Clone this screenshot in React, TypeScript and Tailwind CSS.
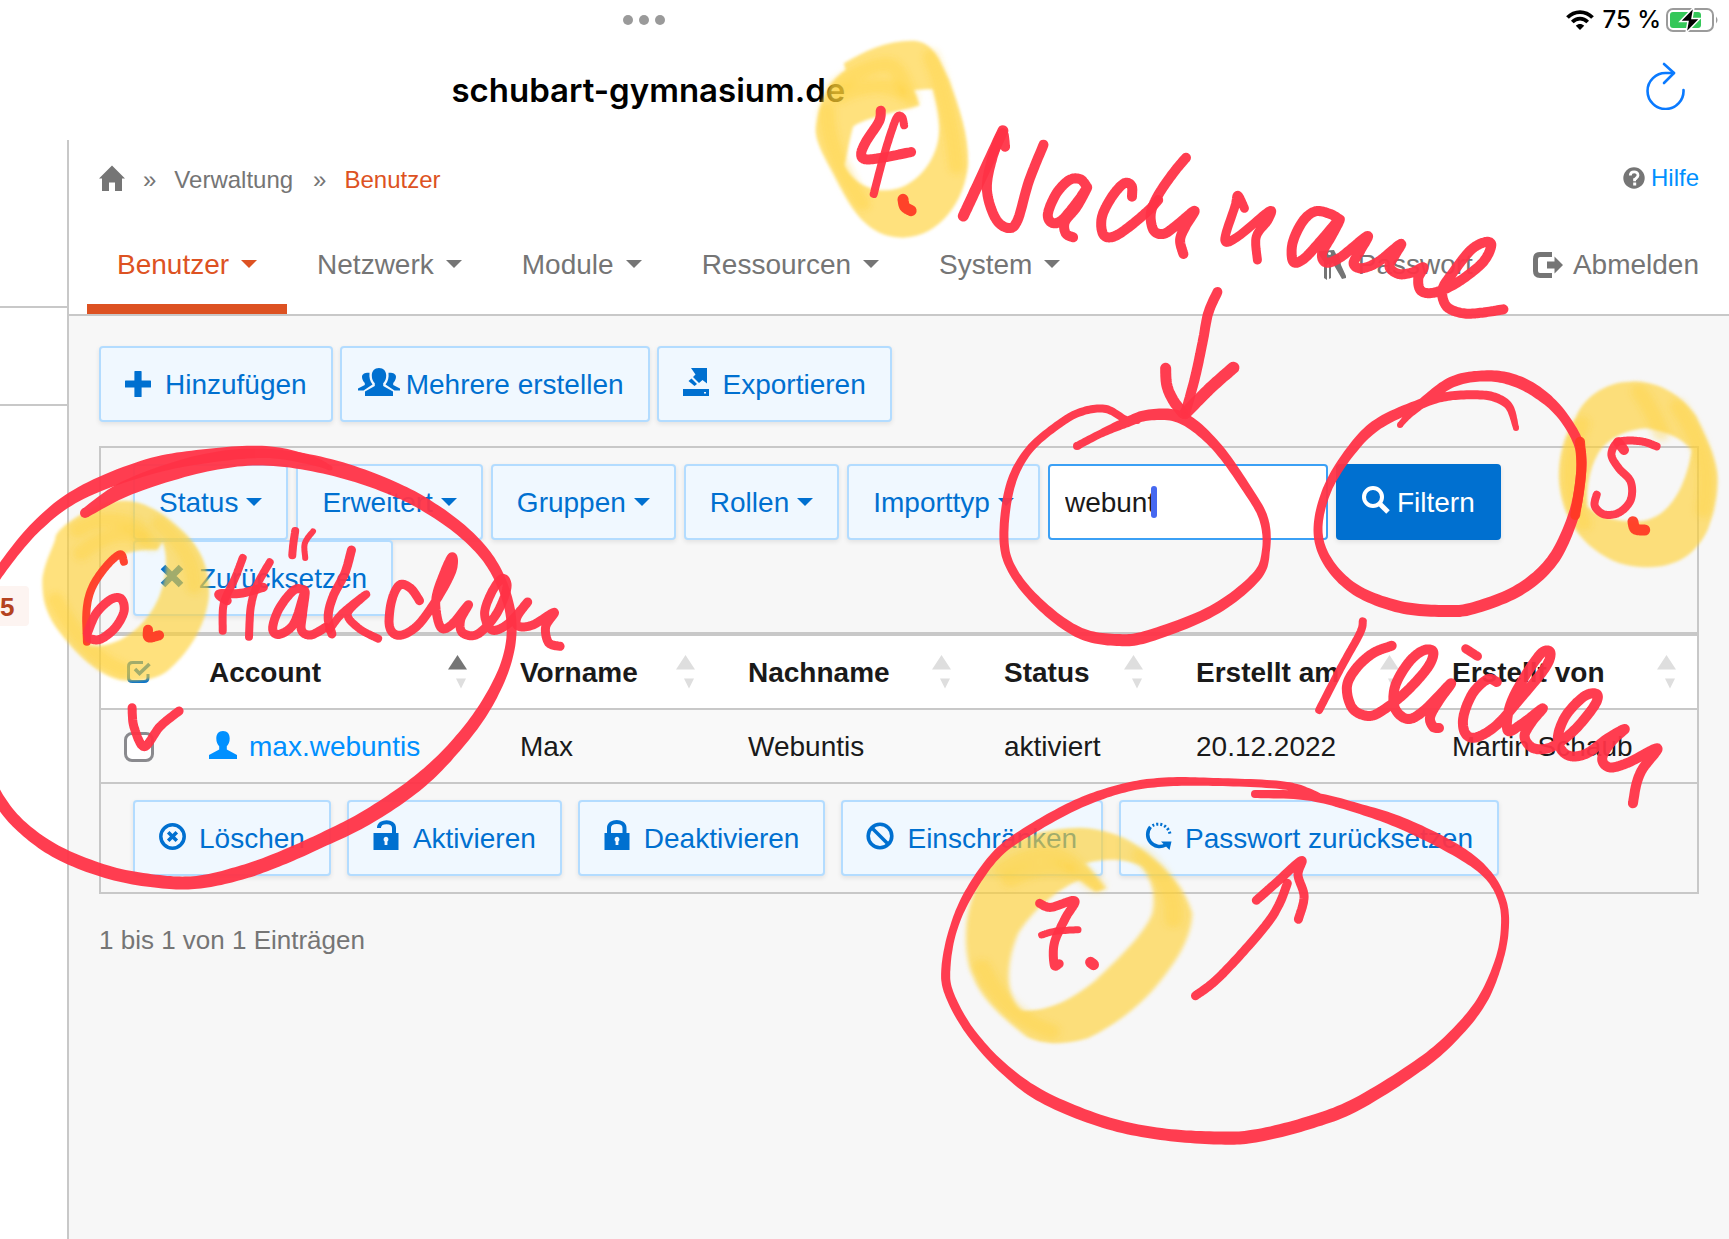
import React from "react";

type Pt = number[];

/* ---------- Icons ---------- */

function HomeIcon() {
  return (
    <svg viewBox="0 0 26 26" className="h-[26px] w-[26px]" fill="currentColor" aria-hidden="true">
      <path d="M13 0.500L26 13.500H23V26H16V17.500H10V26H3V13.500H0Z" />
    </svg>
  );
}

function HelpIcon() {
  return (
    <svg viewBox="0 0 22 22" className="h-[22px] w-[22px]" aria-hidden="true">
      <circle cx="11" cy="11" r="10.700" fill="#757575" />
      <path d="M7.300 8.600C7.300 3.600 15 3.800 15 8.200C15 10.800 12.100 10.800 12.100 13" fill="none" stroke="#fff" strokeWidth="2.800" />
      <path d="M10.200 11.200h2.800v3h-2.800zM10.200 15.400h3v3h-3z" fill="#fff" />
    </svg>
  );
}

function KeysIcon() {
  return (
    <svg viewBox="0 0 27 30" className="h-[30px] w-[27px]" fill="currentColor" aria-hidden="true">
      <path d="M0 1L15 0L17 4V11L12 14V28L10 29V14L8 15V30L5 28V12L0 5Z" />
      <path d="M17 5L20 4L22 15L27 26V28L23 29L16 17L14 13Z" />
      <circle cx="10.500" cy="3.500" r="1.500" fill="#fff" />
    </svg>
  );
}

function LogoutIcon() {
  return (
    <svg viewBox="0 0 30 26" className="h-[26px] w-[30px]" aria-hidden="true">
      <path d="M19 2.500H7Q2.500 2.500 2.500 7V19Q2.500 23.500 7 23.500H19" fill="none" stroke="currentColor" strokeWidth="5" />
      <path d="M14 9.500H21.500V4.500L30 13L21.500 21.500V16.500H14Z" fill="currentColor" />
    </svg>
  );
}

function PlusIcon() {
  return (
    <svg viewBox="0 0 26 26" className="-mt-[2px] h-[26px] w-[26px] shrink-0" fill="currentColor" aria-hidden="true">
      <path d="M10 0h6q.6 0 .6.600V9.500H25.400q.6 0 .6.600v5.800q0 .6-.6.600H16.600v8.900q0 .6-.6.600h-6q-.6 0-.6-.600V16.500H.600q-.6 0-.6-.600v-5.800q0-.6.600-.600H9.400V.600q0-.6.600-.600Z" />
    </svg>
  );
}

function UsersIcon() {
  return (
    <svg viewBox="0 0 42 28" className="-mt-[6px] h-[28px] w-[42px] shrink-0" fill="currentColor" aria-hidden="true">
      <path d="M21 0C25.500 0 28.200 3 28.200 7.500C28.200 11 27 13.500 25.200 15.200V18L35 23.500V28H7V23.500L16.800 18V15.200C15 13.500 13.800 11 13.800 7.500C13.800 3 16.500 0 21 0Z" />
      <path d="M11.500 4.800C11 9.500 12 13.500 14.500 16.500L5.500 22.500H0V20.500L6.800 17V15C4.800 13 4 10.500 4 8.800C4 6 7 4.500 11.500 4.800Z" />
      <path d="M30.500 4.800C31 9.500 30 13.500 27.500 16.500L36.500 22.500H42V20.500L35.200 17V15C37.200 13 38 10.500 38 8.800C38 6 35 4.500 30.500 4.800Z" />
    </svg>
  );
}

function ExportIcon() {
  return (
    <svg viewBox="0 0 26 28" className="-mt-[6px] h-[28px] w-[26px] shrink-0" fill="currentColor" aria-hidden="true">
      <path d="M8 0H24V15.500L19.500 12L16 15L10 9L12.500 6.500Z" />
      <path d="M8.500 10.500L14 16L11.500 18L5.500 13Z" />
      <path fillRule="evenodd" d="M0 21H26V28H0ZM21 24h2v1.500h-2z" />
    </svg>
  );
}

function CrossIcon() {
  return (
    <svg viewBox="0 0 24 24" className="-mt-[6px] h-6 w-6 shrink-0" aria-hidden="true">
      <path d="M3 3L21 21M21 3L3 21" stroke="currentColor" strokeWidth="6.500" />
    </svg>
  );
}

function SearchIcon() {
  return (
    <svg viewBox="0 0 28 28" className="-mt-[6px] h-7 w-7 shrink-0" fill="none" stroke="currentColor" aria-hidden="true">
      <circle cx="11" cy="11" r="9" strokeWidth="4" />
      <path d="M17.500 17.500L26 26" strokeWidth="5" />
    </svg>
  );
}

function DeleteIcon() {
  return (
    <svg viewBox="0 0 27 27" className="-mt-[6px] h-[27px] w-[27px] shrink-0" fill="none" stroke="currentColor" aria-hidden="true">
      <circle cx="13.500" cy="13.500" r="11.700" strokeWidth="3.500" />
      <path d="M9.200 9.200L17.800 17.800M17.800 9.200L9.200 17.800" strokeWidth="3.600" />
    </svg>
  );
}

function LockIcon({ open }: { open?: boolean }) {
  return (
    <svg viewBox="0 0 26 30" className="-mt-[8px] h-[30px] w-[26px] shrink-0" aria-hidden="true">
      <path
        d={open ? "M6 8V7.500C6.500 0.500 21 0.300 21 8V14" : "M5 14V8C5 0 20.500 0 20.500 8V14"}
        fill="none"
        stroke="currentColor"
        strokeWidth="4"
      />
      <path d="M.5 13H25.500V30H.500Z" fill="currentColor" />
      <path d="M13 16.800a2.600 2.600 0 0 1 1.400 4.700V25h-2.800V21.500A2.600 2.600 0 0 1 13 16.800Z" fill="#f0f8ff" />
    </svg>
  );
}

function BanIcon() {
  return (
    <svg viewBox="0 0 28 28" className="-mt-[6px] h-7 w-7 shrink-0" fill="none" stroke="currentColor" strokeWidth="3.600" aria-hidden="true">
      <circle cx="14" cy="14" r="11.800" />
      <path d="M6 6L22 22" />
    </svg>
  );
}

function RotateIcon() {
  return (
    <svg viewBox="0 0 28 28" className="-mt-[6px] h-7 w-7 shrink-0" fill="none" stroke="currentColor" aria-hidden="true">
      <path d="M6.500 4.800A12 12 0 0 0 21.500 23" strokeWidth="3.600" />
      <path d="M8.500 3.600A12 12 0 0 1 26 12" strokeWidth="3" strokeDasharray="2 2" />
      <path d="M17 19.500H27.500L25.500 28Z" fill="currentColor" stroke="none" />
    </svg>
  );
}

function PersonIcon() {
  return (
    <svg viewBox="0 0 28 28" className="-mt-1 h-7 w-7 shrink-0" fill="currentColor" aria-hidden="true">
      <path d="M14 0C18.500 0 20.700 3 20.700 7.500C20.700 11 19.500 13.500 17.800 15.200V18.500L28 24V28H0V24L10.200 18.500V15.200C8.500 13.500 7.300 11 7.300 7.500C7.300 3 9.500 0 14 0Z" />
    </svg>
  );
}

function CheckAllIcon() {
  return (
    <svg viewBox="0 0 24 22" className="h-[22px] w-6" fill="none" stroke="currentColor" strokeWidth="3" aria-hidden="true">
      <path d="M16 1.500H5.500Q1.500 1.500 1.500 5.500V16.500Q1.500 20.500 5.500 20.500H17Q21 20.500 21 16.500V13" />
      <path d="M8 8L12.500 12.500L22.500 3" strokeWidth="3.600" />
    </svg>
  );
}

function WifiIcon() {
  return (
    <svg viewBox="0 0 28 20" className="h-5 w-7" fill="none" stroke="#000" strokeWidth="3.800" aria-hidden="true">
      <path d="M1.500 7.500C8.500 0.200 19.500 0.200 26.500 7.500" />
      <path d="M6.300 12C10.700 7.600 17.300 7.600 21.700 12" />
      <path d="M14 20L9.800 15.800C12.200 13.400 15.800 13.400 18.200 15.800Z" fill="#000" stroke="none" />
    </svg>
  );
}

function BatteryIcon() {
  return (
    <svg viewBox="0 0 54 26" className="h-[26px] w-[54px]" aria-hidden="true">
      <rect x="1" y="2" width="46" height="22" rx="6" fill="#fff" stroke="#9b9b9b" strokeWidth="2" />
      <rect x="4" y="5" width="31" height="16" rx="3" fill="#34c759" />
      <path d="M50 9.500Q53 13 50 16.500Z" fill="#9b9b9b" />
      <path d="M28 0L14 14.500H22L20 26L34 11.500H26Z" fill="#000" stroke="#fff" strokeWidth="1.500" />
    </svg>
  );
}

function ReloadIcon() {
  return (
    <svg viewBox="0 0 40 48" className="h-12 w-10" fill="none" stroke="#0a7aff" strokeWidth="2.600" strokeLinecap="round" strokeLinejoin="round" aria-hidden="true">
      <path d="M28 11H20A18 18 0 1 0 37.500 28" />
      <path d="M18 2L28 11L18 21" />
    </svg>
  );
}

function Caret() {
  return (
    <svg viewBox="0 0 16 8" className="-mt-[2px] h-2 w-4 shrink-0" fill="currentColor" aria-hidden="true">
      <path d="M0 0H16L8 8Z" />
    </svg>
  );
}

/* ---------- Interface parts ---------- */

const buttonBase =
  "flex h-[76px] items-center rounded border-2 border-[#b3dcff] bg-[#f0f8ff] px-6 pt-[2px] text-[28px] leading-8 whitespace-nowrap text-[#0070d0] shadow-[0_2px_5px_rgba(0,0,0,0.09)]";

function IconButton({ icon, label }: { icon: React.ReactNode; label: string }) {
  return (
    <button type="button" className={buttonBase}>
      <span className="mr-[14px] flex w-[26px] justify-center">{icon}</span>
      {label}
    </button>
  );
}

function MenuButton({ label }: { label: string }) {
  return (
    <button type="button" className={buttonBase + " gap-2"}>
      {label}
      <Caret />
    </button>
  );
}

function NavItem({ label, active }: { label: string; active?: boolean }) {
  return (
    <button
      type="button"
      className={
        "flex h-[98px] items-center gap-3 border-b-10 pt-[10px] pr-[30px] pl-[30px] text-[28px] leading-8 " +
        (active ? "border-[#dd5222] text-[#dd5222]" : "border-transparent text-[#757575]")
      }
    >
      {label}
      <Caret />
    </button>
  );
}

function SortHeader({ label, sorted }: { label: string; sorted?: boolean }) {
  return (
    <th scope="col" className="h-[74px] border-b-2 border-[#c8c8c8] p-0 pr-5 pl-8 text-left font-bold">
      <div className="flex items-center justify-between whitespace-nowrap">
        <span className="pt-[2px]">{label}</span>
        <svg viewBox="0 0 20 34" className="h-[34px] w-5 shrink-0" aria-hidden="true">
          <path d="M0 14.500L9.500 0L19 14.500Z" fill={sorted ? "#757575" : "#dedede"} />
          <path d="M8 23.500H18L13 33.500Z" fill="#dedede" />
        </svg>
      </div>
    </th>
  );
}

/* ---------- Hand-drawn annotations ---------- */

const RED = "#ff3347";
const WARM = "#ff3a25";

function smooth(points: Pt[]): Pt[] {
  const out: Pt[] = [];
  for (let i = 0; i < points.length - 1; i++) {
    const a = points[Math.max(i - 1, 0)];
    const b = points[i];
    const c = points[i + 1];
    const d = points[Math.min(i + 2, points.length - 1)];
    for (let s = 0; s < 12; s++) {
      const t = s / 12;
      out.push(
        b.map(
          (_, k) =>
            0.5 *
            (2 * b[k] +
              (c[k] - a[k]) * t +
              (2 * a[k] - 5 * b[k] + 4 * c[k] - d[k]) * t * t +
              (3 * b[k] - a[k] - 3 * c[k] + d[k]) * t * t * t)
        )
      );
    }
  }
  out.push(points[points.length - 1]);
  return out;
}

const join = (points: Pt[]) => points.map((p) => p[0].toFixed(1) + " " + p[1].toFixed(1)).join("L");

/** A pen line of even width. Points are x, y pairs on a finely ruled tile at (ox, oy). */
function Pen({ at, pts, w = 9, color = RED }: { at: Pt; pts: string; w?: number; color?: string }) {
  const [ox, oy, sx] = at;
  const list = pts.split(" ").map((p) => {
    const [x, y] = p.split(",").map(Number);
    return [ox + x / sx, oy + y / 3];
  });
  return (
    <path d={"M" + join(smooth(list))} fill="none" stroke={color} strokeWidth={w} strokeLinecap="round" strokeLinejoin="round" opacity="0.95" />
  );
}

/** A pen line whose width changes along the way: x, y, width. */
function Ribbon({ pts }: { pts: string }) {
  const line = smooth(pts.split(" ").map((p) => p.split(",").map(Number)));
  const left: Pt[] = [];
  const right: Pt[] = [];
  line.forEach((p, i) => {
    const a = line[Math.max(i - 1, 0)];
    const b = line[Math.min(i + 1, line.length - 1)];
    const len = Math.hypot(b[0] - a[0], b[1] - a[1]) || 1;
    const nx = (-(b[1] - a[1]) / len) * (p[2] / 2);
    const ny = ((b[0] - a[0]) / len) * (p[2] / 2);
    left.push([p[0] + nx, p[1] + ny]);
    right.unshift([p[0] - nx, p[1] - ny]);
  });
  const ends = [line[0], line[line.length - 1]];
  return (
    <g fill={RED} opacity="0.95">
      <path d={"M" + join([...left, ...right]) + "Z"} />
      {ends.map((p, i) => (
        <circle key={i} cx={p[0]} cy={p[1]} r={p[2] / 2} />
      ))}
    </g>
  );
}

const T2: Pt = [570, 0, 2.703];
const T3: Pt = [1149, 0, 2.703];
const T4: Pt = [0, 400, 2.703];
const T6: Pt = [1149, 400, 2.703];
const T8: Pt = [900, 780, 2.45];

function Highlight({ at, ring, strokes }: { at: Pt; ring: string; strokes: string[] }) {
  return (
    <g transform={`translate(${at[0]} ${at[1]}) scale(${1 / at[2]} ${1 / 3})`}>
      <path d={ring} fillRule="evenodd" fill="#ffd033" opacity="0.63" filter="url(#soft)" />
      <g filter="url(#softer)">
        {strokes.map((d) => (
          <path key={d} d={d} fill="none" stroke="#ffd033" strokeWidth="44" strokeLinecap="round" opacity="0.34" />
        ))}
      </g>
    </g>
  );
}

function Annotations() {
  return (
    <svg viewBox="0 0 1729 1239" preserveAspectRatio="xMinYMin meet" className="pointer-events-none absolute top-0 left-0 w-full" aria-hidden="true">
      <defs>
        <filter id="soft" x="-10%" y="-10%" width="120%" height="120%">
          <feGaussianBlur stdDeviation="5" />
        </filter>
        <filter id="softer" x="-20%" y="-20%" width="140%" height="140%">
          <feGaussianBlur stdDeviation="9" />
        </filter>
      </defs>

      <Highlight
        at={T2}
        ring="M740 190C800 150 860 120 930 122C980 125 1000 180 1025 240C1050 320 1078 400 1076 490C1070 600 1000 712 900 713C800 712 760 620 730 560C700 490 665 440 664 390C670 320 690 250 745 210ZM980 267L930 270L945 315C930 325 800 350 765 380C755 420 750 460 742 495C760 540 800 570 850 571C930 572 1000 480 998 380C997 340 988 300 980 267Z"
        strokes={["M715 265C770 215 830 190 865 195C895 210 900 260 920 295", "M725 290C780 260 850 245 890 275", "M975 170C1010 260 1035 390 1045 500", "M695 330C690 410 735 520 790 610"]}
      />
      <Highlight
        at={T6}
        ring="M1300 -55C1230 -55 1170 0 1155 50C1120 110 1108 170 1108 230C1112 330 1150 400 1200 445C1250 490 1300 503 1350 502C1430 500 1480 460 1510 390C1530 330 1540 270 1536 220C1530 160 1500 100 1480 50C1450 0 1410 -30 1370 -45C1345 -52 1325 -57 1300 -55ZM1345 85C1290 90 1250 110 1220 150C1195 190 1180 260 1185 320C1220 350 1260 365 1320 364C1400 362 1450 270 1467 150C1440 115 1400 95 1345 85Z"
        strokes={["M1325 -25C1350 10 1370 60 1385 100", "M1430 20C1495 130 1520 210 1498 330", "M1170 70C1130 180 1130 280 1175 370"]}
      />
      <Highlight
        at={T4}
        ring="M330 302C400 300 450 350 500 400C545 450 568 510 565 590C555 680 510 760 450 815C410 845 350 850 310 835C240 805 190 740 150 680C120 630 112 580 115 530C125 470 150 430 150 410C160 380 210 350 240 330C270 310 300 303 330 302ZM440 425L425 450C380 445 330 460 300 480C250 530 228 600 232 690L240 738C330 745 400 670 430 590C450 530 455 480 440 425Z"
        strokes={["M210 390C260 350 330 355 370 380C390 400 400 420 410 430", "M220 460C270 410 330 385 380 415", "M430 370C500 440 525 490 525 560", "M150 600C210 720 260 780 330 810"]}
      />
      <Highlight
        at={T8}
        ring="M440 143C500 145 560 170 600 215C660 270 700 330 716 400C715 470 680 540 640 600C590 680 520 740 460 775C410 795 350 795 310 770C260 720 200 660 180 590C160 540 160 480 163 430C170 360 190 310 210 250C250 190 330 145 440 143ZM455 250L505 325L480 337L440 300C380 330 320 400 290 460C265 530 262 600 272 640C280 670 290 685 300 692C370 695 430 650 480 600C540 530 600 460 618 400C628 340 615 290 590 258C550 235 500 235 455 250Z"
        strokes={["M250 270C310 220 370 205 410 240C440 270 460 300 480 315", "M270 300C330 260 370 260 410 270", "M590 225C650 290 675 350 670 420", "M200 560C240 660 290 720 370 755"]}
      />

      {/* 4. Nachname */}
      <Pen at={T2} w={10} pts="840,332 835,365 800,425 787,462 800,478 850,472 922,456" />
      <Pen at={T2} w={8} pts="903,376 898,352 885,350 870,390 845,480 821,582" />
      <Pen at={T2} w={11} color={WARM} pts="900,598 905,620 922,632" />
      <Pen at={T2} w={11} pts="1063,648 1100,560 1170,392" />
      <Pen at={T2} w={10} pts="1176,440 1168,400 1140,480 1127,570 1150,655 1185,684 1210,660 1240,545 1280,434" />
      <Pen at={T2} w={10} pts="1398,562 1380,538 1350,540 1315,580 1292,640 1302,668 1330,660 1375,600 1398,562 1370,620 1338,665 1340,700 1360,712" />
      <Pen at={T2} w={10} pts="1519,590 1518,558 1498,550 1465,590 1438,650 1440,700 1462,712 1500,690 1560,635 1590,600" />
      <Pen at={T3} w={10} pts="100,473 65,520 25,585 5,640 12,690 38,702 70,680 123,632 98,680 84,720 93,762" />
      <Pen at={T3} w={9} pts="258,625 240,586 232,620 205,720 240,710 325,633 322,660 290,710 293,780" />
      <Pen at={T3} w={10} pts="515,658 490,642 450,634 415,665 388,730 390,785 420,775 470,715 515,658 495,705 468,760 480,788 520,770 590,708 572,750 553,790 575,805 620,785 680,732 665,765 650,800 675,822 710,818 742,802 728,835 735,872 770,878 830,850 900,790 925,738 910,726 870,750 820,820 793,870 805,920 850,940 900,938 958,928" />
      <Pen at={T3} w={10} pts="185,876 160,940 146,1020 125,1130 98,1240" />
      <Pen at={T3} w={11} pts="45,1105 48,1155 65,1200 92,1240" />
      <Pen at={T3} w={12} pts="228,1103 165,1165 98,1240" />
      <Ribbon pts="1077,446,8 1100,434,8 1125,423,10 1149,415,11 1182,418,12 1216,446,10 1249,492,9 1264,520,9 1266,550,8 1256,577,10 1212,611,11 1149,636,12 1117,640,12 1080,633,11 1043,607,10 1014,573,9 1004,540,9 1010,487,9 1029,450,8 1062,422,8 1084,411,8 1106,409,8 1125,419,7 1138,422,4" />

      {/* 5. Klicken */}
      <Ribbon pts="1516,428,6 1510,408,8 1499,399,9 1482,395,9 1450,396,9 1423,403,10 1378,424,11 1350,452,10 1327,490,9 1318,530,9 1328,562,10 1356,590,11 1400,607,12 1445,611,12 1474,608,12 1519,590,12 1552,561,12 1572,520,11 1580,483,10 1580,448,10 1562,415,10 1537,392,12 1510,379,12 1482,376,11 1452,382,11 1425,401,10 1409,415,7 1400,425,6" />
      <Pen at={T6} w={10} color={WARM} pts="1165,125 1168,220 1152,345" />
      <Pen at={T6} w={8} pts="1372,139 1335,125 1290,122 1263,130 1250,165 1270,205 1302,245 1302,300 1270,338 1230,343 1205,318 1210,284" />
      <Pen at={T6} w={10} pts="1268,127 1284,150" />
      <Pen at={T6} w={11} color={WARM} pts="1308,365 1315,387 1340,390" />
      <Pen at={T6} w={8} pts="578,664 570,700 518,805 460,930" />
      <Pen at={T6} w={10} pts="656,737 605,760 560,805 535,860 550,925 595,948 640,925 700,870 755,800 768,755 740,752 700,790 665,860 665,925 700,957 745,930 816,850 785,900 760,950 768,980 784,984" />
      <Pen at={T6} w={9} pts="856,746 888,769" />
      <Pen at={T6} w={10} pts="940,846 915,838 875,880 850,950 855,1000 885,1012 940,975 1000,900 1070,805 1085,758 1060,760 1010,840 975,920 970,992 1010,970 1064,925 1035,965 1015,1010 1040,1045 1090,1040 1150,990 1205,915 1210,882 1175,890 1125,950 1105,1020 1130,1065 1180,1062 1240,1015 1286,987 1250,1025 1225,1075 1245,1102 1295,1088 1374,1045 1335,1105 1318,1150 1308,1210" />

      {/* 6. Häkchen */}
      <Ribbon pts="85,513,10 129,487,16 200,464,18 263,457,17 330,467,16 392,488,14 435,511,13 472,540,12 497,573,11 511,617,10 507,660,10 485,707,12 452,750,13 415,785,15 366,818,15 320,841,14 277,860,14 240,873,14 200,882,13 163,882,13 111,873,13 59,853,13 22,827,12 -2,798,12 -20,760,12" />
      <Ribbon pts="-20,605,9 0,571,10 37,526,11 81,493,13 148,467,16 207,456,14 266,452,12 310,460,9 330,468,5" />
      <Pen at={T4} w={8} color={WARM} pts="335,485 325,463 290,495 250,560 234,630 235,725" />
      <Pen at={T4} w={9} pts="236,700 260,640 300,598 328,597 335,635 310,685 270,718 240,715" />
      <Pen at={T4} w={10} color={WARM} pts="400,689 402,712 430,706" />
      <Pen at={T4} w={8} pts="656,474 635,535 605,610 602,692" />
      <Pen at={T4} w={8} pts="729,487 695,555 678,620 673,710" />
      <Pen at={T4} w={9} pts="614,602 592,582 650,580 712,562" />
      <Pen at={T4} w={8} pts="798,393 793,430 790,466" />
      <Pen at={T4} w={6} pts="846,394 824,430 825,474" />
      <Pen at={T4} w={9} pts="823,570 795,570 755,625 737,685 755,703 795,670 824,575 818,640 815,690 840,705 880,682" />
      <Pen at={T4} w={9} pts="950,450 932,520 900,590 887,650 897,702" />
      <Pen at={T4} w={8} pts="890,690 925,640 990,583 940,640 970,685 1022,716" />
      <Pen at={T4} w={9} pts="1134,602 1110,565 1080,555 1058,605 1053,680 1080,706 1130,675 1185,590 1222,510 1222,470 1200,520 1178,600 1190,680 1220,675 1266,614 1245,660 1250,698 1290,703 1340,645 1370,565 1358,535 1330,575 1310,640 1330,690 1375,670 1426,606 1398,650 1400,678 1440,675 1498,637 1475,680 1483,728 1514,739" />
      <Pen at={T4} w={9} pts="357,923 362,980 390,1040 432,980 484,933" />

      {/* 7. */}
      <Ribbon pts="1255,794,8 1308,796,9 1357,808,10 1406,825,12 1459,852,12 1488,875,9 1502,900,8 1505,925,8 1500,957,8 1484,997,10 1459,1030,11 1422,1063,12 1357,1104,13 1308,1123,13 1255,1136,13 1218,1138,13 1161,1134,12 1104,1122,12 1043,1097,12 1002,1067,10 969,1030,9 949,993,9 946,967,9 953,930,8 969,893,9 998,853,9 1035,827,10 1080,803,10 1124,788,9 1165,782,9 1218,782,8 1280,785,8 1308,792,8 1337,805,4" />
      <Pen at={T8} w={9} pts="342,370 370,382 428,362 405,415 378,490 378,555 390,551" />
      <Pen at={T8} w={7} pts="347,465 380,454 436,449" />
      <Pen at={T8} w={11} pts="467,547 474,554" />
      <Pen at={T8} w={9} pts="724,647 770,605 830,530 900,430 930,370 949,310" />
      <Pen at={T8} w={9} pts="873,361 920,310 983,242 975,285 990,350 976,418" />
    </svg>
  );
}

/* ---------- Page ---------- */

export default function App() {
  return (
    <div className="relative flex min-h-screen flex-col overflow-hidden bg-white font-['Liberation_Sans',Arial,sans-serif] text-[28px] leading-8 text-[#1a1a1a]">
      <header className="h-[140px]">
        <div className="flex h-10 items-center">
          <div className="flex-1" />
          <div className="flex gap-[6px]" aria-hidden="true">
            <span className="h-[10px] w-[10px] rounded-full bg-[#9a9a9a]" />
            <span className="h-[10px] w-[10px] rounded-full bg-[#9a9a9a]" />
            <span className="h-[10px] w-[10px] rounded-full bg-[#9a9a9a]" />
          </div>
          <div className="flex flex-1 basis-[442px] items-center justify-end pr-[9px] font-['Inter',sans-serif] text-[24px] font-medium text-black">
            <WifiIcon />
            <span className="mr-[5px] ml-2 whitespace-nowrap">75 %</span>
            <BatteryIcon />
          </div>
        </div>
        <div className="flex h-[100px] items-center">
          <h1 className="w-[75%] text-center font-['Inter',sans-serif] text-[33px] leading-10 font-semibold text-black">
            schubart-gymnasium.de
          </h1>
          <button type="button" aria-label="Neu laden" className="mr-[43px] mb-2 ml-auto">
            <ReloadIcon />
          </button>
        </div>
      </header>

      <div className="flex flex-1">
        <aside className="w-[69px] shrink-0 border-r-2 border-[#c8c8c8]">
          <div className="h-[168px] border-b-2 border-[#c8c8c8]" />
          <div className="h-[98px] border-b-2 border-[#c8c8c8]" />
          <div className="mt-[180px] flex h-10 w-[29px] items-center rounded-r bg-[#fdf4f1] pt-[2px] text-[26px] font-bold text-[#b5431f]">5</div>
        </aside>

        <main className="min-w-0 flex-1 bg-[#f7f7f7]">
          <div className="border-b-2 border-[#c8c8c8] bg-white">
            <div className="flex h-[76px] items-center justify-between px-[30px] text-[24px]">
              <nav aria-label="Brotkrumen" className="flex items-center text-[#757575]">
                <a href="#start" aria-label="Startseite">
                  <HomeIcon />
                </a>
                <span className="mx-[18px] pt-1">»</span>
                <a href="#verwaltung" className="pt-1">Verwaltung</a>
                <span className="mr-[18px] ml-5 pt-1">»</span>
                <a href="#benutzer" className="pt-1 text-[#dd5222]">Benutzer</a>
              </nav>
              <a href="#hilfe" className="flex items-center gap-[6px] text-[#0090ff]">
                <HelpIcon />
                Hilfe
              </a>
            </div>
            <div className="flex items-end justify-between pr-[30px] pl-[18px] text-[#757575]">
              <nav aria-label="Hauptmenü" className="flex">
                <NavItem label="Benutzer" active />
                <NavItem label="Netzwerk" />
                <NavItem label="Module" />
                <NavItem label="Ressourcen" />
                <NavItem label="System" />
              </nav>
              <div className="flex h-[98px] items-center gap-[60px]">
                <a href="#passwort" className="flex items-center gap-3">
                  <KeysIcon />
                  Passwort
                </a>
                <a href="#abmelden" className="flex items-center gap-[10px]">
                  <LogoutIcon />
                  Abmelden
                </a>
              </div>
            </div>
          </div>

          <div className="p-[30px]">
            <div className="flex flex-wrap gap-[7px]">
              <IconButton icon={<PlusIcon />} label="Hinzufügen" />
              <IconButton icon={<UsersIcon />} label="Mehrere erstellen" />
              <IconButton icon={<ExportIcon />} label="Exportieren" />
            </div>

            <section className="mt-6 border-2 border-[#c8c8c8]">
              <form className="flex flex-wrap gap-x-2 border-b-4 border-[#c8c8c8] px-8 py-4" onSubmit={(e) => e.preventDefault()}>
                <MenuButton label="Status" />
                <MenuButton label="Erweitert" />
                <MenuButton label="Gruppen" />
                <MenuButton label="Rollen" />
                <MenuButton label="Importtyp" />
                <div className="relative">
                  <input
                    type="text"
                    aria-label="Suche"
                    defaultValue="webunt"
                    className="block h-[76px] w-[280px] rounded border-2 border-[#3ba0f5] bg-white px-[15px] pt-[2px] text-[28px] leading-8 outline-none"
                  />
                  <span className="absolute top-[22px] left-[103px] h-8 w-[6px] rounded-full bg-[#4668f0]" />
                </div>
                <button
                  type="submit"
                  className="flex h-[76px] items-center gap-[7px] rounded bg-[#0070d0] px-[26px] pt-[2px] text-white shadow-[0_2px_5px_rgba(0,0,0,0.09)]"
                >
                  <SearchIcon />
                  Filtern
                </button>
                <IconButton icon={<CrossIcon />} label="Zurücksetzen" />
              </form>

              <table className="w-full table-fixed border-separate border-spacing-0 text-left">
                <colgroup>
                  <col className="w-[76px]" />
                  <col className="w-[311px]" />
                  <col className="w-[228px]" />
                  <col className="w-[256px]" />
                  <col className="w-[192px]" />
                  <col className="w-[256px]" />
                  <col />
                </colgroup>
                <thead className="bg-white">
                  <tr>
                    <th scope="col" className="border-b-2 border-[#c8c8c8] p-0 pl-[26px]">
                      <button type="button" aria-label="Alle auswählen" className="block text-[#0070d0]">
                        <CheckAllIcon />
                      </button>
                    </th>
                    <SortHeader label="Account" sorted />
                    <SortHeader label="Vorname" />
                    <SortHeader label="Nachname" />
                    <SortHeader label="Status" />
                    <SortHeader label="Erstellt am" />
                    <SortHeader label="Erstellt von" />
                  </tr>
                </thead>
                <tbody className="bg-[#f9f9f9] whitespace-nowrap [&_td]:h-[74px] [&_td]:border-b-2 [&_td]:border-[#c8c8c8] [&_td]:p-0 [&_td]:pt-[2px] [&_td]:pl-8">
                  <tr>
                    <td className="pl-[23px]!">
                      <input
                        type="checkbox"
                        aria-label="max.webuntis auswählen"
                        className="block h-[30px] w-[30px] appearance-none rounded-[8px] border-[3px] border-[#8a8a8e] bg-white"
                      />
                    </td>
                    <td>
                      <a href="#max.webuntis" className="flex items-center gap-3 text-[#0090ff]">
                        <PersonIcon />
                        max.webuntis
                      </a>
                    </td>
                    <td>Max</td>
                    <td>Webuntis</td>
                    <td>aktiviert</td>
                    <td>20.12.2022</td>
                    <td>Martin Schaub</td>
                  </tr>
                </tbody>
              </table>

              <div className="flex flex-wrap gap-x-4 px-8 py-4">
                <IconButton icon={<DeleteIcon />} label="Löschen" />
                <IconButton icon={<LockIcon open />} label="Aktivieren" />
                <IconButton icon={<LockIcon />} label="Deaktivieren" />
                <IconButton icon={<BanIcon />} label="Einschränken" />
                <IconButton icon={<RotateIcon />} label="Passwort zurücksetzen" />
              </div>
            </section>

            <p className="mt-[30px] text-[26px] text-[#757575]">1 bis 1 von 1 Einträgen</p>
          </div>
        </main>
      </div>

      <Annotations />
    </div>
  );
}
